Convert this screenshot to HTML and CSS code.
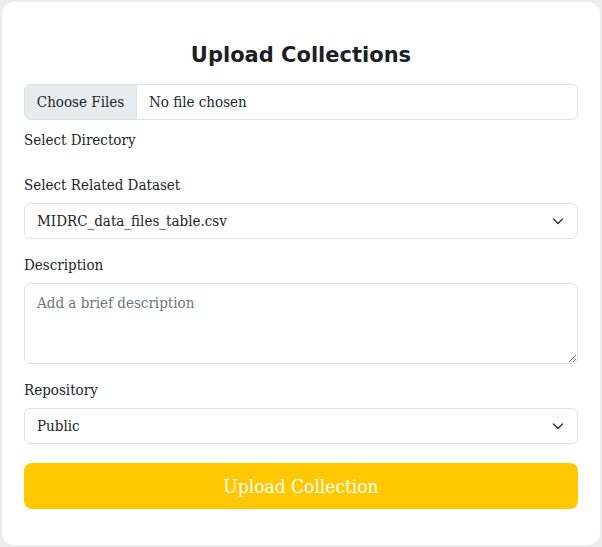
FILE: index.html
```html
<!DOCTYPE html>
<html lang="en">
<head>
<meta charset="utf-8">
<title>Upload Collections</title>
<link rel="stylesheet" href="styles.css">
</head>
<body>
<div class="card">
  <h1 class="title">Upload Collections</h1>
  <div class="file-input">
    <span class="file-btn">Choose Files</span>
    <span class="file-name">No file chosen</span>
  </div>
  <div class="label dir-label">Select Directory</div>

  <div class="label">Select Related Dataset</div>
  <div class="select">
    <span>MIDRC_data_files_table.csv</span>
    <svg class="chev" width="12" height="8" viewBox="0 0 12 8"><path d="M1.5 2l4.5 4.5 4.5-4.5" fill="none" stroke="#343a40" stroke-width="1.5" stroke-linecap="round" stroke-linejoin="round"/></svg>
  </div>

  <div class="label">Description</div>
  <textarea class="textarea" placeholder="Add a brief description"></textarea>

  <div class="label">Repository</div>
  <div class="select">
    <span>Public</span>
    <svg class="chev" width="12" height="8" viewBox="0 0 12 8"><path d="M1.5 2l4.5 4.5 4.5-4.5" fill="none" stroke="#343a40" stroke-width="1.5" stroke-linecap="round" stroke-linejoin="round"/></svg>
  </div>

  <button class="submit">Upload Collection</button>
</div>
</body>
</html>
```
FILE: styles.css
```css
* { box-sizing: border-box; }
html, body { margin: 0; padding: 0; }
body {
  background: #ececec;
  width: 602px;
  height: 547px;
  padding: 2px;
  font-family: "DejaVu Serif Condensed", "DejaVu Serif", serif;
  color: #212529;
}
.card {
  background: #fff;
  width: 598px;
  height: 543px;
  border-radius: 12px;
  padding: 40px 22px 0 22px;
  display: flex;
  flex-direction: column;
}
.title {
  margin: 0 0 16px 0;
  text-align: center;
  font-family: "DejaVu Sans", sans-serif;
  font-weight: bold;
  font-size: 21px;
  line-height: 26px;
  color: #1c1f23;
}
.file-input {
  height: 36px;
  border: 1px solid #dee2e6;
  border-radius: 6px;
  display: flex;
  align-items: stretch;
  overflow: hidden;
  font-size: 15px;
}
.file-btn {
  background: #e9ecef;
  border-right: 1px solid #dee2e6;
  width: 112px;
  display: flex;
  align-items: center;
  justify-content: center;
}
.file-name {
  display: flex;
  align-items: center;
  padding-left: 12px;
}
.label {
  font-size: 15px;
  line-height: 22px;
  margin-bottom: 7px;
}
.dir-label {
  margin-top: 9px;
  margin-bottom: 23px;
}
.select {
  height: 36px;
  border: 1px solid #dee2e6;
  border-radius: 6px;
  display: flex;
  align-items: center;
  justify-content: space-between;
  padding: 0 13px 0 12px;
  font-size: 15px;
  margin-bottom: 15px;
}
.chev { display: block; }
.textarea {
  display: block;
  width: 100%;
  height: 81px;
  border: 1px solid #dee2e6;
  border-radius: 6px;
  padding: 8px 12px;
  font-family: inherit;
  font-size: 15px;
  line-height: 22px;
  color: #212529;
  margin: 0 0 15px 0;
  resize: vertical;
  outline: none;
}
.textarea::placeholder { color: #6c757d; }
.submit {
  margin-top: 4px;
  height: 46px;
  border: none;
  border-radius: 8px;
  background: #ffc800;
  color: #fff;
  font-family: inherit;
  font-size: 19px;
  cursor: pointer;
}
```
